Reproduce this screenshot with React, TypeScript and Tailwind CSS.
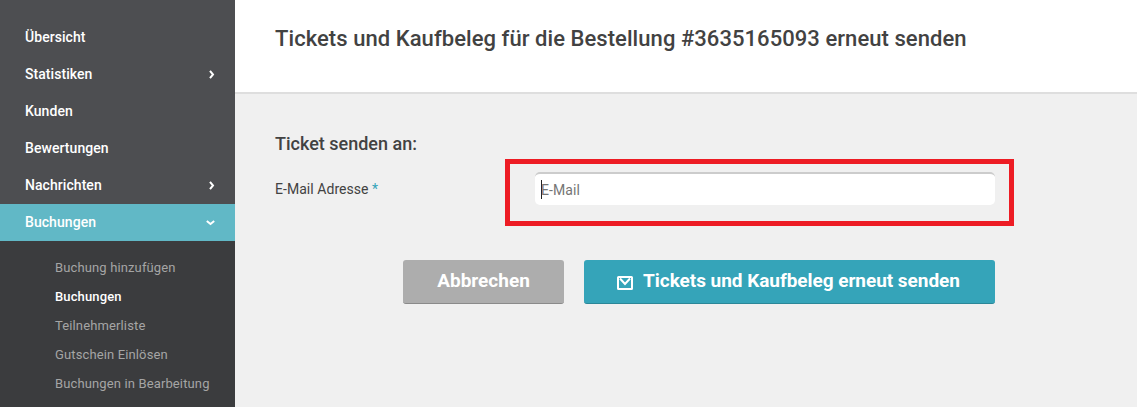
import React from "react";
import clsx from "clsx";

const menuItems = [
    { label: "Übersicht" },
    { label: "Statistiken", arrow: "right" },
    { label: "Kunden" },
    { label: "Bewertungen" },
    { label: "Nachrichten", arrow: "right" },
    { label: "Buchungen", arrow: "down", active: true },
];

const subItems = [
    "Buchung hinzufügen",
    "Buchungen",
    "Teilnehmerliste",
    "Gutschein Einlösen",
    "Buchungen in Bearbeitung",
];

const Arrow = ({ direction }: { direction: string }) => {
    if (direction === "down") {
        return (
            <svg width="9" height="6" viewBox="0 0 9 6" className="mr-5 mt-0.5" fill="none" stroke="currentColor" strokeWidth="2">
                <path d="M.8 1l3.7 3L8.2 1" />
            </svg>
        );
    }
    return (
        <svg width="6" height="9" viewBox="0 0 6 9" className="mr-5 mt-0.5" fill="none" stroke="currentColor" strokeWidth="2">
            <path d="M1 .8l3 3.7-3 3.7" />
        </svg>
    );
}

const MailIcon = () => (
    <svg width="16" height="14" viewBox="0 0 16 14" className="mt-[3px]" fill="none" stroke="currentColor" strokeWidth="2">
        <rect x="1" y="1" width="14" height="12" rx="0.5" />
        <path d="M3 2.5L8 8l5-5.5" />
    </svg>
)

const Sidebar = () => (
    <nav className="w-[235px] shrink-0 bg-[#4d4e51] pt-[19px] flex flex-col">
        {menuItems.map((item) => (
            <a
                key={item.label}
                className={clsx(
                    "h-[37px] pl-[25px] pb-0.5 flex items-center justify-between text-sm font-medium tracking-[0.06px] text-white",
                    item.active && "bg-[#61b8c6]"
                )}
            >
                <span>{item.label}</span>
                {item.arrow && <Arrow direction={item.arrow} />}
            </a>
        ))}
        <div className="grow bg-[#3b3c3e] pt-3 pl-[55px]">
            {subItems.map((label) => (
                <a
                    key={label}
                    className={clsx(
                        "block text-[13px] leading-[29px] tracking-[0.13px] whitespace-nowrap",
                        label === "Buchungen" ? "font-medium text-white" : "text-[#a5a5a5]"
                    )}
                >
                    {label}
                </a>
            ))}
        </div>
    </nav>
)

const App = () => {
    return (
        <div className="flex h-[407px] overflow-hidden bg-[#f0f0f0] font-['Roboto',sans-serif] text-[#424242]">
            <Sidebar />
            <main className="grow">
                <header className="h-[94px] bg-white border-b-2 border-[#dedede] pl-10 pt-6">
                    <h1 className="text-[22px] leading-[30px] font-medium tracking-[0.06px] whitespace-nowrap">
                        Tickets und Kaufbeleg für die Bestellung #3635165093 erneut senden
                    </h1>
                </header>
                <form className="pl-10 pt-[38px] w-[760px]">
                    <h2 className="text-lg leading-6 font-medium">Ticket senden an:</h2>
                    <div className="relative flex mt-4 h-[33px]">
                        <label className="w-[260px] text-sm leading-[35px] tracking-[0.05px]">
                            E-Mail Adresse <span className="text-[#35a4b9]">*</span>
                        </label>
                        <div className="w-[460px] flex items-center bg-white border-t-2 border-[#cccccc] rounded-[5px] pl-1.5">
                            <span className="w-px h-[19px] bg-[#222222]" />
                            <input
                                placeholder="E-Mail"
                                className="grow -ml-px text-sm outline-none tracking-[0.1px] placeholder:text-[#757575]"
                            />
                        </div>
                        <div className="absolute left-[230px] -top-[13px] w-[509px] h-[67px] border-5 border-[#ed1c24]" />
                    </div>
                    <div className="flex justify-end gap-5 mt-[55px] text-[19px] font-bold text-white">
                        <button type="button" className="w-[161px] h-11 rounded-[3px] bg-[#adadad] border-b border-[#8a8a8a]">
                            Abbrechen
                        </button>
                        <button type="button" className="w-[411px] h-11 rounded-[3px] bg-[#35a4b9] border-b border-[#2b8798] pr-0.5 flex items-center justify-center gap-2.5 tracking-[-0.04px]">
                            <MailIcon />
                            Tickets und Kaufbeleg erneut senden
                        </button>
                    </div>
                </form>
            </main>
        </div>
    )
}

export default App
